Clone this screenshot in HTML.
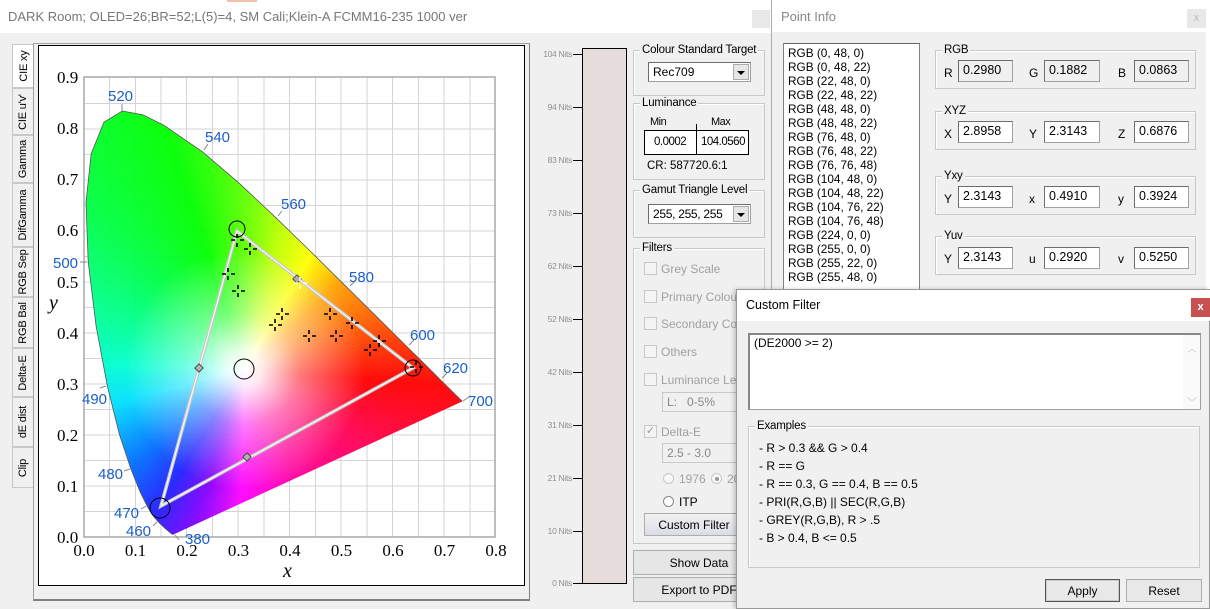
<!DOCTYPE html>
<html><head><meta charset="utf-8">
<style>
*{box-sizing:border-box;margin:0;padding:0}
body{width:1210px;height:609px;overflow:hidden;background:#f0f0f0;font-family:"Liberation Sans",sans-serif;font-size:12px;color:#000;position:relative}
.a{position:absolute}
.gb{position:absolute;border:1px solid #c8c8c8;box-shadow:inset 1px 1px 0 #fff}
.gb>.t{position:absolute;top:-8px;left:6px;background:#f0f0f0;padding:0 2px;font-size:11.5px;line-height:14px;white-space:nowrap;letter-spacing:-0.2px}
.fld{position:absolute;height:22px;background:#fff;border:1px solid #a0a0a0;border-top-color:#6d6d6d;border-left-color:#6d6d6d;padding:2px 0 0 4px;font-size:12.5px;white-space:nowrap;overflow:hidden}
.btn{position:absolute;border:1px solid #adadad;background:#e8e8e8;text-align:center;font-size:12px}
.cb{position:absolute;width:13px;height:13px;border:1px solid #c8c8c8;background:#f4f4f4}
.dis{position:absolute;color:#a0a0a0;font-size:12px;white-space:nowrap}
.tab{position:absolute;left:12px;width:21px;border:1px solid #c8c8c8;border-right:none;background:#f0f0f0}
.tab span{position:absolute;left:50%;top:50%;transform:translate(-50%,-50%) rotate(-90deg);white-space:nowrap;font-size:11px;letter-spacing:-0.2px}
.nit{position:absolute;left:530px;width:42px;text-align:right;font-size:8.5px;color:#909090;letter-spacing:-0.3px}
.tick{position:absolute;left:573px;width:9px;height:1px;background:#000}
.ex{position:absolute;left:759px;font-size:12px}
#col{position:absolute;left:0;top:0;width:530px;height:609px;
clip-path:path('M173.7,534.4 L172.3,534.4 168.7,531.4 164.6,528 158.2,521.8 153.8,516.6 147.9,507.5 140.4,492.6 131,469.2 119.4,434.4 107.4,386.3 96.1,326.1 88.2,261.9 86,202.4 91.2,153.7 104,122.1 122.3,111 142.8,114.8 163.7,125.2 202.2,151.6 239.3,183.3 276.1,217.9 312.7,253.5 347.9,288.3 380.2,320.2 406.9,346.6 426.9,366.3 440.1,379.5 454.3,393.5 462.4,401.4 Z');
background:
radial-gradient(circle at 245px 369px,#fff 0,rgba(255,255,255,0.9) 18px,rgba(255,255,255,0.45) 55px,rgba(255,255,255,0) 120px),
conic-gradient(from 0deg at 245px 369px,#60ff00 0deg,#c0ff00 15deg,#ffff00 30deg,#ffa000 48deg,#ff6000 68deg,#ff0000 95deg,#ff0050 120deg,#ff00a0 155deg,#ff00ff 182deg,#8000ff 198deg,#2020ff 212deg,#0070ff 230deg,#00e0ff 255deg,#00ffd0 272deg,#00ff90 292deg,#00ff40 318deg,#00ff00 342deg,#60ff00 360deg);
opacity:0.95}
</style></head><body>

<div class="a" style="left:0;top:0;width:771px;height:33px;background:#fff"></div>
<div class="a" style="left:227px;top:0;width:30px;height:2px;background:#f1c0a8"></div>
<div class="a" style="left:8px;top:9px;font-size:13px;color:#777">DARK Room; OLED=26;BR=52;L(5)=4, SM Cali;Klein-A FCMM16-235 1000 ver</div>
<div class="a" style="left:752px;top:10px;width:18px;height:18px;background:#e8e8e8"></div>

<div class="tab" style="top:44px;height:44px;background:#fff;width:22px"><span>CIE xy</span></div>
<div class="tab" style="top:88px;height:47px"><span>CIE u'v'</span></div>
<div class="tab" style="top:135px;height:48px"><span>Gamma</span></div>
<div class="tab" style="top:183px;height:64px"><span>DifGamma</span></div>
<div class="tab" style="top:247px;height:50px"><span>RGB Sep</span></div>
<div class="tab" style="top:297px;height:51px"><span>RGB Bal</span></div>
<div class="tab" style="top:348px;height:49px"><span>Delta-E</span></div>
<div class="tab" style="top:397px;height:50px"><span>dE dist</span></div>
<div class="tab" style="top:447px;height:41px"><span>Clip</span></div>

<div class="a" style="left:33px;top:43px;width:497px;height:558px;border:1px solid #a0a0a0;border-right-color:#808080;border-bottom:2px solid #808080;background:#f0f0f0"></div>
<div class="a" style="left:38px;top:45px;width:487px;height:541px;border:1px solid #000;background:#fff"></div>

<svg class="a" style="left:0;top:0" width="530" height="609" viewBox="0 0 530 609">
<g stroke="#d4d4d4" stroke-width="1">
<path d="M109.5,77V537M135.5,77V537M161,77V537M186.5,77V537M212.5,77V537M238,77V537M264,77V537M289.5,77V537M315.5,77V537M341,77V537M367,77V537M392.5,77V537M418.5,77V537M444,77V537M470,77V537"/>
<path d="M84,511.5H495M84,486H495M84,460.5H495M84,435H495M84,409.5H495M84,384H495M84,358.5H495M84,333H495M84,307.5H495M84,282H495M84,256.5H495M84,231H495M84,205.5H495M84,180H495M84,154.5H495M84,129H495M84,103.5H495"/>
</g>
<rect x="84" y="77" width="411" height="460" fill="none" stroke="#a8a8a8" stroke-width="1.5"/>
</svg>

<div id="col"></div>

<svg class="a" style="left:0;top:0" width="530" height="609" viewBox="0 0 530 609">
<path d="M173.7,534.4 L172.3,534.4 168.7,531.4 164.6,528 158.2,521.8 153.8,516.6 147.9,507.5 140.4,492.6 131,469.2 119.4,434.4 107.4,386.3 96.1,326.1 88.2,261.9 86,202.4 91.2,153.7 104,122.1 122.3,111 142.8,114.8 163.7,125.2 202.2,151.6 239.3,183.3 276.1,217.9 312.7,253.5 347.9,288.3 380.2,320.2 406.9,346.6 426.9,366.3 440.1,379.5 454.3,393.5 462.4,401.4" fill="none" stroke="#555" stroke-width="0.8"/>
<g stroke="#888" stroke-width="1">
<path d="M122,111V104M204,150L208,144M278,216L282,211M350,286L355,281M409,345L414,340M442,378L447,373M463,401L469,397M87,262H80M106,386L100,388M130,469L124,471M146,506L141,509M157,522L153,526M175,535L179,540"/>
</g>
<g fill="#1a5fc8" font-family="Liberation Sans,sans-serif" font-size="15">
<text x="108" y="101">520</text><text x="205" y="142">540</text><text x="281" y="209">560</text><text x="349" y="282">580</text><text x="410" y="340">600</text><text x="443" y="373">620</text><text x="468" y="406">700</text>
<text x="53" y="268">500</text><text x="82" y="404">490</text><text x="98" y="479">480</text><text x="114" y="518">470</text><text x="126" y="536">460</text><text x="185" y="544">380</text>
</g>
<g fill="none">
<path d="M237,231 L413,368 L161,506 Z" stroke="#c8c8c8" stroke-width="3.5"/>
<path d="M237,231 L413,368 L161,506 Z" stroke="#fff" stroke-width="1"/>
</g>
<g fill="#b0b0b0" stroke="#333" stroke-width="0.8">
<rect x="196" y="365" width="6" height="6" transform="rotate(45 199 368)"/>
<rect x="294" y="276" width="6" height="6" transform="rotate(45 297 279)"/>
<rect x="244" y="454" width="6" height="6" transform="rotate(45 247 457)"/>
</g>
<g fill="none" stroke="#000" stroke-width="1">
<circle cx="237" cy="229" r="8"/><circle cx="244" cy="369" r="10"/><circle cx="160" cy="508" r="10"/><circle cx="413" cy="368" r="8"/>
</g>
<g stroke="#000" stroke-width="1.6">
<path d="M237,234v4M237,243v4M231,240h4M240,240h4"/>
<path d="M250,243v4M250,251v4M244,249h4M253,249h4"/>
<path d="M228,268v4M228,276v4M222,274h4M231,274h4"/>
<path d="M238,285v4M238,293v4M232,291h4M241,291h4"/>
<path d="M282,308v4M282,316v4M276,314h4M285,314h4"/>
<path d="M275,319v4M275,327v4M269,325h4M278,325h4"/>
<path d="M330,308v4M330,316v4M324,314h4M333,314h4"/>
<path d="M309,330v4M309,338v4M303,336h4M312,336h4"/>
<path d="M336,330v4M336,338v4M330,336h4M339,336h4"/>
<path d="M352,317v4M352,325v4M346,323h4M355,323h4"/>
<path d="M379,335v4M379,343v4M373,341h4M382,341h4"/>
<path d="M370,344v4M370,352v4M364,350h4M373,350h4"/>
<path d="M416,361v4M416,369v4M410,367h4M419,367h4"/>
</g>
<path d="M300,277v4M300,285v4M294,283h4M303,283h4" stroke="#fff" stroke-width="1.6"/>
<g font-family="Liberation Serif,serif" font-size="17" fill="#000">
<text x="57" y="83">0.9</text><text x="57" y="134">0.8</text><text x="57" y="185">0.7</text><text x="57" y="236">0.6</text><text x="57" y="288">0.5</text><text x="57" y="339">0.4</text><text x="57" y="390">0.3</text><text x="57" y="441">0.2</text><text x="57" y="492">0.1</text><text x="57" y="543">0.0</text>
<g text-anchor="middle"><text x="84" y="556">0.0</text><text x="135.5" y="556">0.1</text><text x="187" y="556">0.2</text><text x="238.5" y="556">0.3</text><text x="290" y="556">0.4</text><text x="341.5" y="556">0.5</text><text x="393" y="556">0.6</text><text x="444.5" y="556">0.7</text><text x="496" y="556">0.8</text></g>
<text x="283" y="577" font-style="italic" font-size="20">x</text>
<text x="49" y="309" font-style="italic" font-size="20">y</text>
</g>
</svg>

<div class="nit" style="top:49px">104 Nits</div><div class="tick" style="top:54px"></div>
<div class="nit" style="top:102px">94 Nits</div><div class="tick" style="top:107px"></div>
<div class="nit" style="top:155px">83 Nits</div><div class="tick" style="top:160px"></div>
<div class="nit" style="top:208px">73 Nits</div><div class="tick" style="top:213px"></div>
<div class="nit" style="top:261px">62 Nits</div><div class="tick" style="top:266px"></div>
<div class="nit" style="top:314px">52 Nits</div><div class="tick" style="top:319px"></div>
<div class="nit" style="top:367px">42 Nits</div><div class="tick" style="top:372px"></div>
<div class="nit" style="top:420px">31 Nits</div><div class="tick" style="top:425px"></div>
<div class="nit" style="top:473px">21 Nits</div><div class="tick" style="top:478px"></div>
<div class="nit" style="top:526px">10 Nits</div><div class="tick" style="top:531px"></div>
<div class="nit" style="top:578px">0 Nits</div><div class="tick" style="top:583px"></div>
<div class="a" style="left:582px;top:48px;width:45px;height:536px;background:#e6dcdb;border:1px solid #000"></div>

<div class="gb" style="left:633px;top:50px;width:132px;height:46px"><div class="t">Colour Standard Target</div></div>
<div class="fld" style="left:648px;top:62px;width:103px;height:20px;padding-top:2px;font-size:12px">Rec709</div>
<div class="a" style="left:733px;top:64px;width:16px;height:16px;background:#e6e6e6;border:1px solid #adadad"></div>
<div class="a" style="left:737px;top:71px;border:4px solid transparent;border-top:4px solid #000;border-bottom:none"></div>

<div class="gb" style="left:633px;top:103px;width:132px;height:77px"><div class="t">Luminance</div></div>
<div class="a" style="left:650px;top:116px;font-size:11px;letter-spacing:-0.5px">Min</div>
<div class="a" style="left:711px;top:116px;font-size:11px;letter-spacing:-0.5px">Max</div>
<div class="a" style="left:696px;top:124px;width:1px;height:7px;background:#000"></div>
<div class="a" style="left:644px;top:130px;width:105px;height:25px;border:1px solid #000;background:#fff"></div>
<div class="a" style="left:696px;top:130px;width:1px;height:25px;background:#000"></div>
<div class="a" style="left:654px;top:136px;font-size:11.5px;letter-spacing:-0.5px">0.0002</div>
<div class="a" style="left:701px;top:136px;font-size:11.5px;letter-spacing:-0.5px">104.0560</div>
<div class="a" style="left:647px;top:160px;font-size:11.5px">CR: 587720.6:1</div>

<div class="gb" style="left:633px;top:190px;width:132px;height:48px"><div class="t">Gamut Triangle Level</div></div>
<div class="fld" style="left:648px;top:204px;width:103px;height:20px;padding-top:2px;font-size:12px;letter-spacing:-0.3px">255, 255, 255</div>
<div class="a" style="left:733px;top:206px;width:16px;height:16px;background:#e6e6e6;border:1px solid #adadad"></div>
<div class="a" style="left:737px;top:213px;border:4px solid transparent;border-top:4px solid #000;border-bottom:none"></div>

<div class="gb" style="left:633px;top:248px;width:132px;height:296px"><div class="t">Filters</div></div>
<div class="cb" style="left:644px;top:262px"></div><div class="dis" style="left:661px;top:262px">Grey Scale</div>
<div class="cb" style="left:644px;top:290px"></div><div class="dis" style="left:661px;top:290px">Primary Colours</div>
<div class="cb" style="left:644px;top:317px"></div><div class="dis" style="left:661px;top:317px">Secondary Colours</div>
<div class="cb" style="left:644px;top:345px"></div><div class="dis" style="left:661px;top:345px">Others</div>
<div class="cb" style="left:644px;top:373px"></div><div class="dis" style="left:661px;top:373px">Luminance Level</div>
<div class="a" style="left:662px;top:392px;width:80px;height:20px;border:1px solid #c8c8c8;background:#f0f0f0;color:#888;padding:2px 4px">L:&nbsp;&nbsp; 0-5%</div>
<div class="cb" style="left:644px;top:425px;color:#999;font-size:11px;line-height:10px;text-align:center">✓</div><div class="dis" style="left:661px;top:425px">Delta-E</div>
<div class="a" style="left:662px;top:443px;width:80px;height:20px;border:1px solid #c8c8c8;background:#f0f0f0;color:#888;padding:2px 4px">2.5 - 3.0</div>
<div class="a" style="left:663px;top:473px;width:11px;height:11px;border-radius:50%;border:1px solid #c8c8c8;background:#f8f8f8"></div><div class="dis" style="left:679px;top:472px">1976</div>
<div class="a" style="left:711px;top:473px;width:11px;height:11px;border-radius:50%;border:1px solid #c8c8c8;background:#f8f8f8"></div><div class="a" style="left:715px;top:477px;width:4px;height:4px;border-radius:50%;background:#999"></div><div class="dis" style="left:727px;top:472px">2000</div>
<div class="a" style="left:663px;top:496px;width:11px;height:11px;border-radius:50%;border:1px solid #888;background:#fff"></div><div class="a" style="left:679px;top:495px">ITP</div>
<div class="btn" style="left:644px;top:513px;width:100px;height:23px;background:linear-gradient(#f2f2f2,#dcdce6);padding-top:4px">Custom Filter</div>
<div class="btn" style="left:633px;top:550px;width:132px;height:25px;padding-top:5px;background:#e6e6e6">Show Data</div>
<div class="btn" style="left:633px;top:577px;width:132px;height:25px;padding-top:5px;background:#e6e6e6">Export to PDF</div>

<div class="a" style="left:771px;top:0;width:439px;height:292px;background:#f0f0f0;border-left:1px solid #aaa"></div>
<div class="a" style="left:772px;top:0;width:438px;height:32px;background:#fff"></div>
<div class="a" style="left:781px;top:9px;font-size:13px;color:#888">Point Info</div>
<div class="a" style="left:1187px;top:9px;width:19px;height:19px;background:#e8e8e8;color:#bbb;text-align:center;font-size:11px;line-height:19px">x</div>
<div class="a" style="left:783px;top:43px;width:137px;height:250px;background:#fff;border:1px solid #828282;border-top-color:#666;padding:2px 0 0 4px;font-size:11.8px;line-height:14px">
RGB (0, 48, 0)<br>RGB (0, 48, 22)<br>RGB (22, 48, 0)<br>RGB (22, 48, 22)<br>RGB (48, 48, 0)<br>RGB (48, 48, 22)<br>RGB (76, 48, 0)<br>RGB (76, 48, 22)<br>RGB (76, 76, 48)<br>RGB (104, 48, 0)<br>RGB (104, 48, 22)<br>RGB (104, 76, 22)<br>RGB (104, 76, 48)<br>RGB (224, 0, 0)<br>RGB (255, 0, 0)<br>RGB (255, 22, 0)<br>RGB (255, 48, 0)</div>

<div class="gb" style="left:935px;top:50px;width:261px;height:39px"><div class="t">RGB</div></div>
<div class="a" style="left:944px;top:66px">R</div><div class="fld" style="left:958px;top:60px;width:55px;background:#f0f0f0">0.2980</div>
<div class="a" style="left:1029px;top:66px">G</div><div class="fld" style="left:1044px;top:60px;width:56px;background:#f0f0f0">0.1882</div>
<div class="a" style="left:1118px;top:66px">B</div><div class="fld" style="left:1134px;top:60px;width:55px;background:#f0f0f0">0.0863</div>

<div class="gb" style="left:935px;top:111px;width:261px;height:39px"><div class="t">XYZ</div></div>
<div class="a" style="left:944px;top:127px">X</div><div class="fld" style="left:958px;top:121px;width:55px">2.8958</div>
<div class="a" style="left:1029px;top:127px">Y</div><div class="fld" style="left:1044px;top:121px;width:56px">2.3143</div>
<div class="a" style="left:1118px;top:127px">Z</div><div class="fld" style="left:1134px;top:121px;width:55px">0.6876</div>

<div class="gb" style="left:935px;top:176px;width:261px;height:39px"><div class="t">Yxy</div></div>
<div class="a" style="left:944px;top:192px">Y</div><div class="fld" style="left:958px;top:186px;width:55px">2.3143</div>
<div class="a" style="left:1029px;top:192px">x</div><div class="fld" style="left:1044px;top:186px;width:56px">0.4910</div>
<div class="a" style="left:1118px;top:192px">y</div><div class="fld" style="left:1134px;top:186px;width:55px">0.3924</div>

<div class="gb" style="left:935px;top:236px;width:261px;height:39px"><div class="t">Yuv</div></div>
<div class="a" style="left:944px;top:252px">Y</div><div class="fld" style="left:958px;top:247px;width:55px">2.3143</div>
<div class="a" style="left:1029px;top:252px">u</div><div class="fld" style="left:1044px;top:247px;width:56px">0.2920</div>
<div class="a" style="left:1118px;top:252px">v</div><div class="fld" style="left:1134px;top:247px;width:55px">0.5250</div>
<div class="a" style="left:1206px;top:32px;width:4px;height:260px;background:#fff"></div>

<div class="a" style="left:736px;top:289px;width:474px;height:320px;background:#f0f0f0;border:1px solid #999;box-shadow:-2px 0 4px rgba(0,0,0,0.2)"></div>
<div class="a" style="left:737px;top:290px;width:473px;height:31px;background:#fff"></div>
<div class="a" style="left:746px;top:298px;font-size:12.5px">Custom Filter</div>
<div class="a" style="left:1191px;top:298px;width:19px;height:19px;background:#c75050;color:#fff;text-align:center;font-weight:bold;font-size:11px;line-height:19px">x</div>
<div class="a" style="left:748px;top:333px;width:453px;height:77px;background:#fff;border:1px solid #a0a0a0;border-top:2px solid #888;border-left:2px solid #888"></div>
<div class="a" style="left:754px;top:336px;font-size:12px">(DE2000 &gt;= 2)</div>
<div class="a" style="left:1183px;top:335px;width:17px;height:74px;background:#fafafa"></div>
<div class="a" style="left:1187px;top:340px;color:#ccc;font-size:10px">︿</div>
<div class="a" style="left:1187px;top:394px;color:#ccc;font-size:10px">﹀</div>
<div class="gb" style="left:748px;top:426px;width:452px;height:142px"><div class="t">Examples</div></div>
<div class="ex" style="top:441px">- R &gt; 0.3 &amp;&amp; G &gt; 0.4</div>
<div class="ex" style="top:459px">- R == G</div>
<div class="ex" style="top:477px">- R == 0.3, G == 0.4, B == 0.5</div>
<div class="ex" style="top:495px">- PRI(R,G,B) || SEC(R,G,B)</div>
<div class="ex" style="top:513px">- GREY(R,G,B), R &gt; .5</div>
<div class="ex" style="top:531px">- B &gt; 0.4, B &lt;= 0.5</div>
<div class="btn" style="left:1045px;top:579px;width:75px;height:23px;padding-top:4px;border:1px solid #555;box-shadow:inset 0 0 0 1px #ccc">Apply</div>
<div class="btn" style="left:1126px;top:579px;width:76px;height:23px;padding-top:4px">Reset</div>
</body></html>
